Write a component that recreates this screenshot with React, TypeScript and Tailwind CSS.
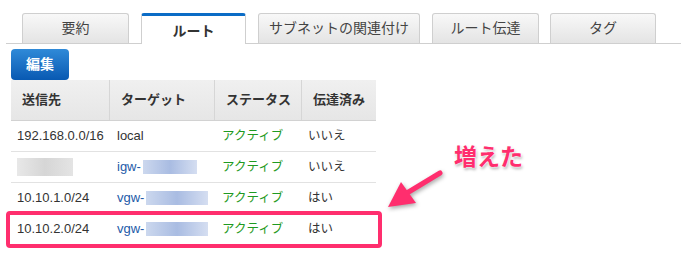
import React from "react";

const tabs = [
  { label: "要約", w: "w-[107px]" },
  { label: "ルート", w: "w-[105px]", active: true },
  { label: "サブネットの関連付け", w: "w-[162px]" },
  { label: "ルート伝達", w: "w-[107px]" },
  { label: "タグ", w: "w-[106px]" },
];

const cols = ["w-[99px]", "w-[105px]", "w-[87px]", "w-[74px]"];
const heads = ["送信先", "ターゲット", "ステータス", "伝達済み"];

function Blur({ kind, w }: { kind: "gray" | "blue"; w: string }) {
  // masked ids in the screenshot
  return kind === "gray" ? (
    <span className={`inline-block h-[18px] ${w} align-middle bg-gradient-to-r from-[#e8e8e8] via-[#d6d6d6] to-[#e4e4e4] blur-[0.5px]`} />
  ) : (
    <span className={`inline-block h-[14px] ${w} align-middle ml-[2px] bg-gradient-to-r from-[#ccd8ee] via-[#a9bce2] to-[#d5def1] blur-[0.5px]`} />
  );
}

type Row = { dest: React.ReactNode; target: React.ReactNode; prop: string };

const rows: Row[] = [
  { dest: "192.168.0.0/16", target: <span className="text-[#333]">local</span>, prop: "いいえ" },
  {
    dest: <Blur kind="gray" w="w-[56px]" />,
    target: (
      <span className="text-[#1d5aa8] flex items-center">
        igw-<Blur kind="blue" w="w-[54px]" />
      </span>
    ),
    prop: "いいえ",
  },
  {
    dest: "10.10.1.0/24",
    target: (
      <span className="text-[#1d5aa8] flex items-center">
        vgw-<Blur kind="blue" w="w-[62px]" />
      </span>
    ),
    prop: "はい",
  },
  {
    dest: "10.10.2.0/24",
    target: (
      <span className="text-[#1d5aa8] flex items-center">
        vgw-<Blur kind="blue" w="w-[62px]" />
      </span>
    ),
    prop: "はい",
  },
];

export default function App() {
  return (
    <div
      className="relative w-[681px] h-[260px] overflow-hidden bg-white text-[#333]"
      style={{ fontFamily: '"Liberation Sans", "Noto Sans CJK JP", sans-serif' }}
    >
      {/* tab strip */}
      <div className="ml-[6px] pt-[13px] pl-[16px] flex items-end border-b border-[#cfcfcf]">
        {tabs.map((t, i) => (
          <div
            key={t.label}
            className={`${t.w} ${i > 0 ? (i === 4 ? "ml-[11px]" : "ml-[12px]") : ""} ${
              t.active
                ? "h-[31px] -mb-px bg-white border-x border-[#cfcfcf] border-t-[3px] border-t-[#0b6cc6] font-bold text-[14px] text-[#333] pt-[3px]"
                : "h-[30px] bg-gradient-to-b from-[#f8f8f8] to-[#e4e4e4] border border-b-0 border-[#cfcfcf] text-[14px] text-[#444]"
            } rounded-t-[3px] flex items-center justify-center`}
          >
            {t.label}
          </div>
        ))}
      </div>

      {/* edit button */}
      <div className="ml-[11px] mt-[5px] w-[58px] h-[31px] rounded-[4px] bg-gradient-to-b from-[#2f8ad8] to-[#0859b2] flex items-center justify-center text-white font-bold text-[14px]">
        編集
      </div>

      {/* route table */}
      <div className="ml-[11px] w-[365px]">
        <div className="flex h-[41px] bg-gradient-to-b from-[#f0f0f0] to-[#e6e6e6] border-b border-[#d2d2d2]">
          {heads.map((h, i) => (
            <div
              key={h}
              className={`${cols[i]} flex items-center pl-[11px] font-bold text-[13px] text-[#333] ${
                i < 3 ? "border-r border-[#d6d6d6]" : ""
              }`}
            >
              {h}
            </div>
          ))}
        </div>
        {rows.map((r, i) => (
          <div key={i} className="flex h-[31px] border-b border-[#e2e2e2] text-[13px]">
            <div className={`${cols[0]} flex items-center pl-[6px]`}>{r.dest}</div>
            <div className={`${cols[1]} flex items-center pl-[7px]`}>{r.target}</div>
            <div className={`${cols[2]} flex items-center pl-[7px] text-[12.5px] text-[#1f9a22]`}>アクティブ</div>
            <div className={`${cols[3]} flex items-center pl-[6px] text-[12.5px]`}>{r.prop}</div>
          </div>
        ))}
      </div>

      {/* annotation: highlight box */}
      <div className="absolute left-[6px] top-[211px] w-[376px] h-[37px] rounded-[4px] border-[4px] border-[#ff2e6e]" />

      {/* annotation: label */}
      <div
        className="absolute left-[454px] top-[146px] text-[23px] font-bold text-[#ff2e6e] leading-none"
        style={{ textShadow: "0 0 2px #fff, 0 0 3px #fff, 1px 2px 3px rgba(0,0,0,0.35)" }}
      >
        増えた
      </div>

      {/* annotation: arrow */}
      <svg className="absolute left-0 top-0" width="681" height="260" style={{ filter: "drop-shadow(1px 2px 2px rgba(0,0,0,0.35))" }}>
        <line x1="440" y1="173" x2="402" y2="196" stroke="#ff2e6e" strokeWidth="5" strokeLinecap="round" />
        <polygon points="388,207 401,182 416,203" fill="#ff2e6e" />
      </svg>
    </div>
  );
}
